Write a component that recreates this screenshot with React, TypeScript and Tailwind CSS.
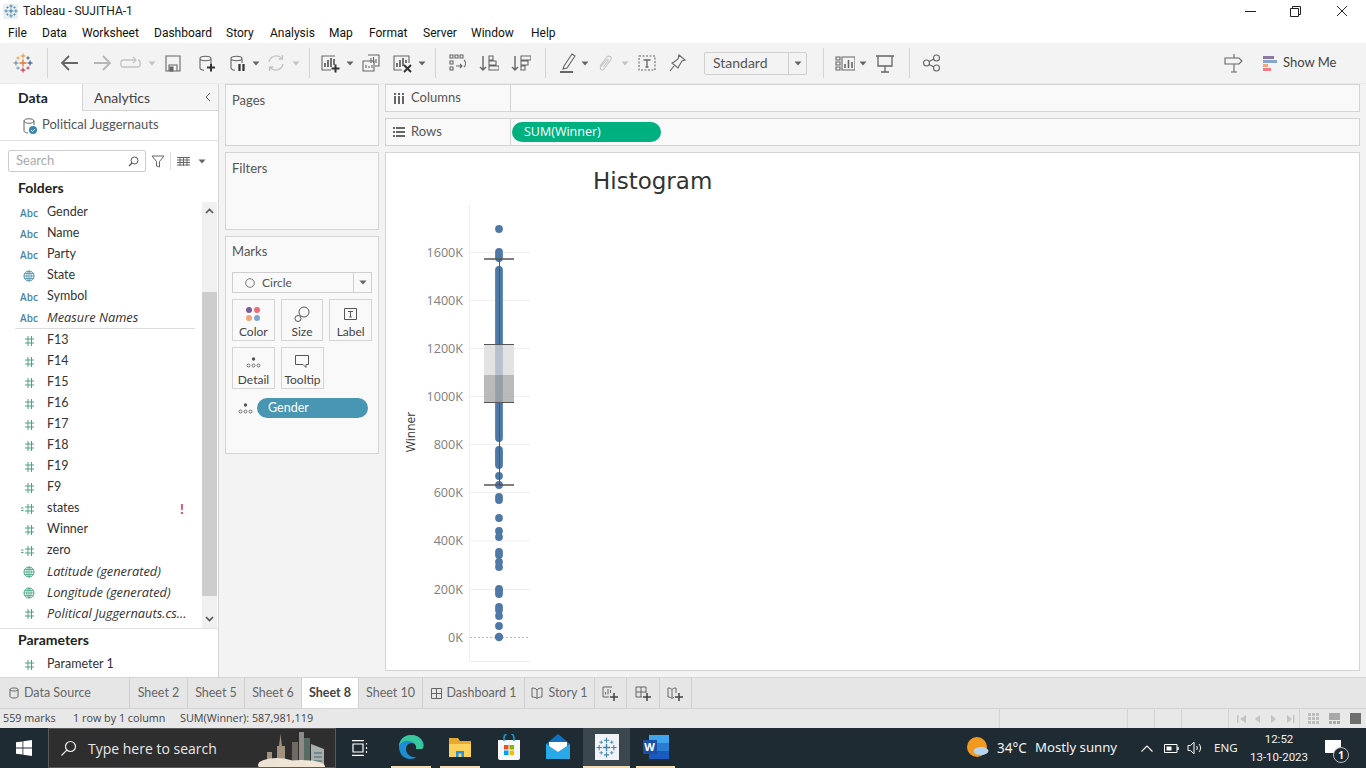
import React from "react";

const C = "#666666";

function Sep({ ml }: { ml: string }) {
  return <div className={`w-px h-[30px] bg-[#d4d4d4] ${ml}`} />;
}

function Caret({ ml, color = "#666666" }: { ml: string; color?: string }) {
  return (
    <svg width="8" height="5" viewBox="0 0 8 5" className={ml}>
      <path d="M0.5 0.5h7L4 4.5z" fill={color} />
    </svg>
  );
}

function Ico({ ml, w = 20, children }: { ml: string; w?: number; children: React.ReactNode }) {
  return (
    <svg width={w} height="22" viewBox={`0 0 ${w} 22`} fill="none" stroke={C} strokeWidth="1.1" className={`shrink-0 ${ml}`}>
      {children}
    </svg>
  );
}

function Snow({ size, colors }: { size: number; colors: string[] }) {
  const big = (x: number, y: number, r: number, c: string, w = 1) => (
    <g stroke={c} strokeWidth={w}>
      <path d={`M${x - r} ${y}H${x + r}M${x} ${y - r}V${y + r}`} />
    </g>
  );
  return (
    <svg width={size} height={size} viewBox="0 0 20 20" fill="none">
      {big(10, 10, 3.5, colors[0], 1.3)}
      {big(10, 3, 2.5, colors[1])}
      {big(10, 17, 2.5, colors[2])}
      {big(3, 10, 2.5, colors[3])}
      {big(17, 10, 2.5, colors[4])}
      {big(5, 5, 1.7, colors[1], 0.8)}
      {big(15, 5, 1.7, colors[4], 0.8)}
      {big(5, 15, 1.7, colors[3], 0.8)}
      {big(15, 15, 1.7, colors[2], 0.8)}
    </svg>
  );
}

function Cyl({ x = 4 }: { x?: number }) {
  return (
    <path d={`M${x} 6.5c0-3 11-3 11 0M${x} 6.5c0 3 11 3 11 0M15 6.5V11M${x} 6.5V16c0 1.2 2 2 4 2.2`} />
  );
}

function Toolbar() {
  return (
    <div className="h-[41px] bg-[#f3f3f3] flex items-center shrink-0 border-b border-[#ebebeb]">
      <div className="ml-[13px] w-5 h-5"><Snow size={20} colors={["#e8762b", "#e8962b", "#c72037", "#5b879b", "#1f447a"]} /></div>
      <Sep ml="ml-[14px]" />
      <Ico ml="ml-[12px]"><path d="M2 11h16M9 4l-7 7 7 7" stroke="#666" strokeWidth="1.8" /></Ico>
      <Ico ml="ml-[12px]"><path d="M2 11h16M11 4l7 7-7 7" stroke="#b5b5b5" strokeWidth="1.8" /></Ico>
      <Ico ml="ml-[7px]" w={24}><path d="M16 8H4c-3 0-3 7 0 7h15c3 0 3-7 0-7M14 5l3 3-3 3" stroke="#c4c4c4" strokeWidth="1.3" /></Ico>
      <Caret ml="ml-[5px]" color="#c4c4c4" />
      <Ico ml="ml-[7px]"><path d="M3 4h14v15H3zM6 19v-6h8v6" /><path d="M7 15h3v4H7z" fill="#666" /></Ico>
      <Ico ml="ml-[13px]"><Cyl /><path d="M11 15.5h8M15 11.5v8" stroke="#333" strokeWidth="2" /></Ico>
      <Ico ml="ml-[11px]"><Cyl /><path d="M12.5 12v7M16.5 12v7" stroke="#333" strokeWidth="2.2" /></Ico>
      <Caret ml="ml-[5px]" />
      <Ico ml="ml-[6px]"><path d="M3 10a7.5 7.5 0 0 1 13-3.5M17 12a7.5 7.5 0 0 1-13 3.5M16.5 3v4h-4M3.5 19v-4h4" stroke="#c4c4c4" strokeWidth="1.3" /></Ico>
      <Caret ml="ml-[6px]" color="#c4c4c4" />
      <Sep ml="ml-[9px]" />
      <Ico ml="ml-[10px]"><path d="M15 4H2v14h9" /><path d="M5 15v-4M8 15V8M11 15V6M14 13V7" strokeWidth="1.8" /><path d="M11.5 16.5h8M15.5 12.5v8" stroke="#333" strokeWidth="2" /></Ico>
      <Caret ml="ml-[6px]" />
      <Ico ml="ml-[7px]"><path d="M7 3h11v11h-4M2 9h11v10H2z" /><path d="M10 11V6M12.5 11V5M15 11V7M5 16v-3M8 16v-2M11 16v-3" /></Ico>
      <Ico ml="ml-[11px]"><path d="M17 11V4H2v14h8" /><path d="M5 15v-4M8 15V8M11 14V6M14 11V8" strokeWidth="1.8" /><path d="M12 13l7 7M19 13l-7 7" stroke="#333" strokeWidth="2" /></Ico>
      <Caret ml="ml-[6px]" />
      <Sep ml="ml-[9px]" />
      <Ico ml="ml-[11px]"><path d="M3 3h3v3H3zM8 3h3v3H8zM13 3h3v3h-3zM3 9h3v3H3zM3 15h3v3H3z" /><path d="M9 14h6M13 12l2 2-2 2M17 8c2 2 2 5 0 7" /></Ico>
      <Ico ml="ml-[12px]"><path d="M4 4v14M1 15l3 3 3-3" strokeWidth="1.4" /><path d="M10 4h4v4h-4zM10 9h7v4h-7zM10 14h10v4H10z" /></Ico>
      <Ico ml="ml-[12px]"><path d="M4 4v14M1 15l3 3 3-3" strokeWidth="1.4" /><path d="M10 4h10v4H10zM10 9h7v4h-7zM10 14h4v4h-4z" /></Ico>
      <Sep ml="ml-[14px]" />
      <Ico ml="ml-[12px]"><path d="M6 14L14 2l3 2-8 12-4 1z" /><path d="M2 20h13" stroke="#444" strokeWidth="1.6" /></Ico>
      <Caret ml="ml-[3px]" />
      <Ico ml="ml-[6px]"><path d="M5 14L12 5c1.500-2 5.500 0 4 2.500L9 17c-1.500 2-4.500.5-3.500-2L11.500 8c.8-1 2.200-.2 1.500.8L8.500 15" stroke="#c4c4c4" strokeWidth="1.100" /></Ico>
      <Caret ml="ml-[6px]" color="#c4c4c4" />
      <Ico ml="ml-[8px]"><path d="M2 4h16v14H2z" strokeDasharray="2 1.5" /><path d="M6.5 8h7M10 8v7M8.5 15h3" strokeWidth="1.3" /></Ico>
      <Ico ml="ml-[10px]"><path d="M12 3l6 5-3 1-3 5-1 2-6-5 2-1 4-3zM7 14l-4 5" /></Ico>
      <div className="ml-[17px] w-[103px] h-[23px] border border-[#cfcfcf] rounded-[2px] flex items-center text-[14px] text-[#555] shrink-0">
        <span className="flex-1 pl-2 -mt-[1px]">Standard</span>
        <div className="w-[18px] h-full border-l border-[#cfcfcf] flex items-center justify-center"><Caret ml="" /></div>
      </div>
      <Sep ml="ml-[16px]" />
      <Ico ml="ml-[11px]"><path d="M1 5h4v3H1zM1 10h4v3H1zM1 15h4v3H1zM7 5h13v13H7z" /><path d="M10 16v-4M13.5 16V8M17 16v-6" strokeWidth="1.6" /></Ico>
      <Caret ml="ml-[4px]" />
      <Ico ml="ml-[8px]"><path d="M1 4h18M3 4v10h14V4M10 14v6M6 20h8" strokeWidth="1.3" /></Ico>
      <Sep ml="ml-[14px]" />
      <Ico ml="ml-[12px]"><circle cx="4.5" cy="11" r="3" /><circle cx="14.5" cy="6" r="3" /><circle cx="14.5" cy="16" r="3" /><path d="M7 9.5l5-2.5M7 12.5l5 2.5" /></Ico>
      <Ico ml="ml-auto" w={20}><path d="M1 6h14l3 3-3 3H1zM10 2v4M10 12v8M7 20h6" /></Ico>
      <div className="ml-[19px] w-[14px] flex flex-col gap-px shrink-0">
        <div className="h-[3px] w-[11px] bg-[#8b7aa0]" />
        <div className="h-[3px] w-[14px] bg-[#85a5cc]" />
        <div className="h-[3px] w-[5px] bg-[#f2a675]" />
        <div className="h-[3px] w-[8px] bg-[#f27b86]" />
      </div>
      <span className="ml-[6px] mr-[29px] w-[54px] whitespace-nowrap text-[13px] text-[#444] -mt-[1px]">Show Me</span>
    </div>
  );
}

function Abc() {
  return <span className="text-[10px] font-semibold text-[#4a84a5] w-[18px] text-center leading-none font-['Open_Sans']">Abc</span>;
}

function Globe({ c = "#4b8fab" }: { c?: string }) {
  return (
    <svg width="18" height="12" viewBox="0 0 18 12" fill="none" stroke={c} strokeWidth="1">
      <circle cx="9" cy="6" r="5" />
      <path d="M4 6h10M4.6 3.5h8.8M4.6 8.5h8.8M9 1v10M9 1c-3 3-3 7 0 10M9 1c3 3 3 7 0 10" strokeWidth="0.8" />
    </svg>
  );
}

function Hash({ calc }: { calc?: boolean }) {
  return (
    <svg width="18" height="12" viewBox="0 0 18 12" fill="none" stroke="#46a582" strokeWidth="1">
      <path d="M5 4h9M5 8h9M8 1v10M11.500 1v10" />
      {calc && <path d="M1 5h2.500M1 7.500h2.500" />}
    </svg>
  );
}

function Field({ icon, name, italic, bang }: { icon: React.ReactNode; name: string; italic?: boolean; bang?: boolean }) {
  return (
    <div className="h-[21px] flex items-center pl-[20px] shrink-0">
      <div className="w-[18px] flex justify-center">{icon}</div>
      <span className={`ml-[9px] text-[#333] whitespace-nowrap ${italic ? "italic text-[12.800px] font-['Open_Sans']" : "text-[12.500px]"}`}>{name}</span>
      {bang && <span className="ml-auto mr-[18px] text-[14px] font-bold text-[#d0473b]">!</span>}
    </div>
  );
}

function Chevron({ up }: { up?: boolean }) {
  return (
    <svg width="9" height="6" viewBox="0 0 9 6" fill="none" stroke="#555" strokeWidth="1.6">
      <path d={up ? "M1 5l3.5-3.5L8 5" : "M1 1l3.5 3.5L8 1"} />
    </svg>
  );
}

function LeftPane() {
  return (
    <div className="w-[219px] bg-white border-r border-[#d4d4d4] flex flex-col shrink-0">
      <div className="h-[27px] flex shrink-0">
        <div className="w-[82px] flex items-center pl-[18px] text-[14px] font-bold text-[#222]">Data</div>
        <div className="flex-1 bg-[#f5f5f5] border-l border-b border-[#d4d4d4] flex items-center pl-[11px] pr-[7px] text-[14px] text-[#444]">
          <span className="flex-1">Analytics</span>
          <svg width="6" height="10" viewBox="0 0 6 10" fill="none" stroke="#666"><path d="M5 1L1 5l4 4" /></svg>
        </div>
      </div>
      <div className="h-[30px] border-b border-[#e3e3e3] flex items-center pl-[22px] shrink-0">
        <svg width="16" height="18" viewBox="0 0 16 18" fill="none" stroke="#666">
          <path d="M2 4c0-3 10-3 10 0M2 4c0 3 10 3 10 0M12 4v4M2 4v10c0 1 2 2 4 2" />
          <circle cx="11" cy="13" r="4" fill="#3c83b0" stroke="none" />
          <path d="M9 13l1.5 1.5L13 12" stroke="#fff" />
        </svg>
        <span className="ml-[4px] text-[13px] text-[#555] -mt-[1px]">Political Juggernauts</span>
      </div>
      <div className="h-[61px] shrink-0 flex flex-col">
        <div className="flex items-center mt-[9px] pl-2">
          <div className="w-[138px] h-[22px] border border-[#cccccc] rounded-[2px] flex items-center pl-[7px] pr-[6px] text-[13px] text-[#aaa]">
            <span className="flex-1">Search</span>
            <svg width="11" height="11" viewBox="0 0 11 11" fill="none" stroke="#555"><circle cx="6.5" cy="4.5" r="3.5" /><path d="M4 7l-3 3" strokeWidth="1.3" /></svg>
          </div>
          <svg width="14" height="13" viewBox="0 0 14 13" fill="none" stroke="#666" className="ml-[5px]"><path d="M1 1h12L8.5 6.5V12l-3-1V6.5z" /></svg>
          <div className="w-px h-[18px] bg-[#ddd] ml-[5px]" />
          <svg width="13" height="9" viewBox="0 0 13 9" fill="none" stroke="#666" className="ml-[6px]"><path d="M0 .5h13M0 3h13M0 5.500h13M0 8h13M3 0v9M6.500 0v9M10 0v9" /></svg>
          <Caret ml="ml-[8px]" />
        </div>
        <div className="mt-[6px] pl-[18px] text-[14px] font-bold text-[#222] leading-[20px]">Folders</div>
      </div>
      <div className="h-[426px] flex shrink-0 border-b border-[#e3e3e3] box-content">
        <div className="w-[202px] overflow-hidden flex flex-col">
          <Field icon={<Abc />} name="Gender" />
          <Field icon={<Abc />} name="Name" />
          <Field icon={<Abc />} name="Party" />
          <Field icon={<Globe />} name="State" />
          <Field icon={<Abc />} name="Symbol" />
          <Field icon={<Abc />} name="Measure Names" italic />
          <div className="h-px bg-[#dddddd] ml-[15px] mr-[7px] mb-[1px] shrink-0" />
          <Field icon={<Hash />} name="F13" />
          <Field icon={<Hash />} name="F14" />
          <Field icon={<Hash />} name="F15" />
          <Field icon={<Hash />} name="F16" />
          <Field icon={<Hash />} name="F17" />
          <Field icon={<Hash />} name="F18" />
          <Field icon={<Hash />} name="F19" />
          <Field icon={<Hash />} name="F9" />
          <Field icon={<Hash calc />} name="states" bang />
          <Field icon={<Hash />} name="Winner" />
          <Field icon={<Hash calc />} name="zero" />
          <Field icon={<Globe c="#46a582" />} name="Latitude (generated)" italic />
          <Field icon={<Globe c="#46a582" />} name="Longitude (generated)" italic />
          <Field icon={<Hash />} name="Political Juggernauts.cs..." italic />
        </div>
        <div className="w-[15px] flex flex-col bg-[#f0f0f0]">
          <div className="h-[90px] flex justify-center pt-[6px]"><Chevron up /></div>
          <div className="h-[304px] bg-[#cdcdcd]" />
          <div className="h-[32px] flex justify-center items-end pb-[6px]"><Chevron /></div>
        </div>
      </div>
      <div className="pl-[18px] pt-[1px] text-[14px] font-bold text-[#222] leading-[20px]">Parameters</div>
      <div className="mt-[4px]"><Field icon={<Hash />} name="Parameter 1" /></div>
    </div>
  );
}

function Card({ title, h }: { title: string; h: string }) {
  return (
    <div className={`bg-[#f9f9f9] border border-[#d4d4d4] pl-[6px] pt-[6px] text-[13px] text-[#555] ${h}`}>{title}</div>
  );
}

function MarkBtn({ label, children }: { label: string; children: React.ReactNode }) {
  return (
    <div className="w-[43px] h-[42px] border border-[#d4d4d4] flex flex-col items-center justify-between pt-[5px] pb-[1px]">
      <div className="h-[18px] flex items-center justify-center">{children}</div>
      <span className="text-[12px] text-[#444] leading-[14px]">{label}</span>
    </div>
  );
}

function DetailDots({ c = "#555" }: { c?: string }) {
  return (
    <svg width="15" height="11" viewBox="0 0 15 11" fill="none" stroke={c} strokeWidth="0.8">
      <circle cx="7.500" cy="2" r="1.700" fill={c} stroke="none" />
      <circle cx="2.500" cy="8.500" r="1.500" /><circle cx="7.500" cy="8.500" r="1.500" /><circle cx="12.500" cy="8.500" r="1.500" />
    </svg>
  );
}

function MarksCard() {
  return (
    <div className="h-[218px] bg-[#f9f9f9] border border-[#d4d4d4] px-[6px] flex flex-col">
      <div className="mt-[6px] text-[13px] text-[#555] leading-[17px]">Marks</div>
      <div className="mt-[12px] h-[21px] border border-[#cfcfcf] flex items-center text-[12px] text-[#555]">
        <svg width="10" height="10" viewBox="0 0 10 10" fill="none" stroke="#777" className="ml-[12px]"><circle cx="5" cy="5" r="4.300" /></svg>
        <span className="ml-[7px] flex-1">Circle</span>
        <div className="w-[18px] h-full border-l border-[#cfcfcf] flex items-center justify-center"><Caret ml="" /></div>
      </div>
      <div className="mt-[6px] flex gap-[6px]">
        <MarkBtn label="Color">
          <svg width="16" height="16" viewBox="0 0 16 16"><circle cx="4" cy="4" r="3" fill="#7b5e96" /><circle cx="12" cy="4" r="3" fill="#ee6a78" /><circle cx="4" cy="12" r="3" fill="#f2a575" /><circle cx="12" cy="12" r="3" fill="#7ea3cc" /></svg>
        </MarkBtn>
        <MarkBtn label="Size">
          <svg width="16" height="16" viewBox="0 0 16 16" fill="none" stroke="#555"><circle cx="10" cy="6" r="5" /><circle cx="4" cy="12.500" r="3" fill="#f9f9f9" /></svg>
        </MarkBtn>
        <MarkBtn label="Label">
          <svg width="14" height="13" viewBox="0 0 14 13" fill="none" stroke="#555"><path d="M.5.5h12v11H.500z" /><path d="M4 3.500h5M6.500 3.500v5.500M5.200 9h2.600" /></svg>
        </MarkBtn>
      </div>
      <div className="mt-[6px] flex gap-[6px]">
        <MarkBtn label="Detail"><DetailDots /></MarkBtn>
        <MarkBtn label="Tooltip">
          <svg width="15" height="14" viewBox="0 0 15 14" fill="none" stroke="#555"><path d="M.5.500h13v9H11v3l-3-3H.500z" /></svg>
        </MarkBtn>
      </div>
      <div className="mt-[9px] flex items-center">
        <div className="ml-[6px]"><DetailDots /></div>
        <div className="ml-[4px] w-[111px] h-[20px] rounded-full bg-[#4996b2] text-white text-[12.500px] pl-[11px] flex items-center">Gender</div>
      </div>
    </div>
  );
}

function Shelf({ label, icon, children }: { label: string; icon: React.ReactNode; children?: React.ReactNode }) {
  return (
    <div className="h-[28px] bg-[#f9f9f9] border border-[#d4d4d4] flex shrink-0">
      <div className="w-[125px] border-r border-[#d4d4d4] flex items-center pl-[7px] text-[13px] text-[#555]">
        {icon}
        <span className="ml-[6px]">{label}</span>
      </div>
      <div className="flex-1 flex items-center pl-px">{children}</div>
    </div>
  );
}

const AXIS = [
  ["1600K", 252.5], ["1400K", 300.5], ["1200K", 348.5], ["1000K", 396.5], ["800K", 444.5],
  ["600K", 492.5], ["400K", 541], ["200K", 589.5],
] as const;

const DOTS: number[] = [229, 252, 255, 258];
for (let y = 270; y <= 438; y += 3) DOTS.push(y);
for (let y = 450; y <= 466; y += 2.5) DOTS.push(y);
DOTS.push(476, 485, 497, 500, 518, 531, 537, 552, 555, 562, 567, 589, 591, 594, 607, 610, 616, 626);

function Chart() {
  const font = "'Open Sans', sans-serif";
  return (
    <svg width="160" height="465" viewBox="386 205 160 465" className="block">
      <path d="M469.500 205V661.500H530" stroke="#eeeeee" fill="none" />
      {AXIS.map(([t, y]) => (
        <g key={t}>
          <path d={`M470 ${y}H530`} stroke="#efefef" />
          <text x="463" y={y + 4} textAnchor="end" fontSize="12.600" fill="#808080" fontFamily={font}>{t}</text>
        </g>
      ))}
      <text x="463" y="642" textAnchor="end" fontSize="12.600" fill="#808080" fontFamily={font}>0K</text>
      <path d="M470 637.500H528" stroke="#bbbbbb" strokeDasharray="2 2" />
      <text transform="translate(415 432) rotate(-90)" textAnchor="middle" fontSize="12" fill="#333" fontFamily={font}>Winner</text>
      {DOTS.map((y, i) => <circle key={i} cx="499" cy={y} r="3.900" fill="#4e79a7" />)}
      <circle cx="499" cy="637" r="4.200" fill="#4e79a7" />
      <rect x="484" y="344.500" width="30" height="30.500" fill="#d9d9d9" fillOpacity="0.75" />
      <rect x="484" y="375" width="30" height="27.500" fill="#a9a9a9" fillOpacity="0.8" />
      <path d="M499.500 259V344.500M499.500 402.500V485" stroke="#555" />
      <path d="M484 344.500H514M484 402.500H514" stroke="#555" />
      <path d="M484 259H514M484 485H514" stroke="#555" strokeWidth="1.500" />
    </svg>
  );
}

function Main() {
  return (
    <div className="flex-1 flex min-h-0 bg-[#f3f3f3]">
      <LeftPane />
      <div className="w-[154px] ml-[6px] flex flex-col gap-[6px] shrink-0">
        <Card title="Pages" h="h-[62px]" />
        <Card title="Filters" h="h-[78px]" />
        <MarksCard />
      </div>
      <div className="w-[975px] ml-[6px] flex flex-col gap-[6px] shrink-0">
        <Shelf label="Columns" icon={
          <svg width="12" height="11" viewBox="0 0 12 11" fill="#666"><path d="M1 0h2v2H1zM1 3h2v8H1zM5 0h2v2H5zM5 3h2v8H5zM9 0h2v2H9zM9 3h2v8H9z" /></svg>
        } />
        <Shelf label="Rows" icon={
          <svg width="12" height="10" viewBox="0 0 12 10" fill="#666"><path d="M0 0h2v2H0zM3 0h9v2H3zM0 4h2v2H0zM3 4h9v2H3zM0 8h2v2H0zM3 8h9v2H3z" /></svg>
        }>
          <div className="w-[149px] h-[20px] rounded-full bg-[#00b180] text-white text-[12.500px] pl-[12px] flex items-center font-['Open_Sans']">SUM(Winner)</div>
        </Shelf>
        <div className="h-[519px] bg-white border border-[#d4d4d4] flex flex-col">
          <div className="ml-[207px] mt-[12px] h-[40px] text-[23px] leading-[32px] text-[#333] font-['DejaVu_Sans']">Histogram</div>
          <Chart />
        </div>
      </div>
    </div>
  );
}

function Tab({ w, active, children }: { w: string; active?: boolean; children: React.ReactNode }) {
  return (
    <div className={`${w} h-full border-r border-[#d0d0d0] flex items-center justify-center text-[12.500px] shrink-0 ${active ? "bg-white font-bold text-[#444]" : "text-[#666]"}`}>
      {children}
    </div>
  );
}

function Tabs() {
  return (
    <div className="h-[31px] bg-[#e6e6e6] border-t border-[#d4d4d4] flex shrink-0">
      <Tab w="w-[130px]">
        <div className="flex items-center w-full pl-[9px]">
          <svg width="10" height="12" viewBox="0 0 10 12" fill="none" stroke="#666"><path d="M1 2.500c0-2 8-2 8 0v7c0 2-8 2-8 0zM1 2.500c0 2 8 2 8 0" /></svg>
          <span className="ml-[5px]">Data Source</span>
        </div>
      </Tab>
      <Tab w="w-[58px]">Sheet 2</Tab>
      <Tab w="w-[57px]">Sheet 5</Tab>
      <Tab w="w-[57px]">Sheet 6</Tab>
      <Tab w="w-[57px]" active>Sheet 8</Tab>
      <Tab w="w-[64px]">Sheet 10</Tab>
      <Tab w="w-[102px]">
        <svg width="11" height="11" viewBox="0 0 11 11" fill="none" stroke="#666"><path d="M.5.5h10v10H.5zM5.500.5v10M.5 5.500h10" /></svg>
        <span className="ml-[5px]">Dashboard 1</span>
      </Tab>
      <Tab w="w-[70px]">
        <svg width="12" height="12" viewBox="0 0 12 12" fill="none" stroke="#666"><path d="M1 1c2 0 4 .5 5 2 1-1.500 3-2 5-2v9c-2 0-4 .5-5 1.500C5 10.500 3 10 1 10zM6 3v8.500" /></svg>
        <span className="ml-[5px]">Story 1</span>
      </Tab>
      <Tab w="w-[32px]">
        <svg width="17" height="15" viewBox="0 0 17 15" fill="none" stroke="#666"><path d="M10 1H1v10h6M3.500 8.500V6M6 8.500V3M8.500 7V4" /><path d="M8 11h8M12 7v8" stroke="#444" strokeWidth="1.500" /></svg>
      </Tab>
      <Tab w="w-[33px]">
        <svg width="17" height="15" viewBox="0 0 17 15" fill="none" stroke="#666"><path d="M7 11H1V1h10v6M6 1v10M1 6h10" /><path d="M8 11h8M12 7v8" stroke="#444" strokeWidth="1.500" /></svg>
      </Tab>
      <Tab w="w-[32px]">
        <svg width="17" height="15" viewBox="0 0 17 15" fill="none" stroke="#666"><path d="M1 2c2 0 3 .5 4 1.500 1-1 2-1.500 4-1.500v5M1 2v9c2 0 3 .5 4 1.500.5-.5 1-.8 2-1M5 3.500v9" /><path d="M8 11h8M12 7v8" stroke="#444" strokeWidth="1.500" /></svg>
      </Tab>
    </div>
  );
}

function Status() {
  return (
    <div className="h-[20px] bg-[#e8e8e8] border-t border-[#d4d4d4] flex items-center text-[10.800px] text-[#444] shrink-0 font-['Open_Sans']">
      <span className="ml-[3px] w-[70px]">559 marks</span>
      <span className="w-[107px]">1 row by 1 column</span>
      <span className="w-[819px]">SUM(Winner): 587,981,119</span>
      <div className="h-full w-px bg-[#d4d4d4]" />
      <div className="w-[127px]" />
      <div className="h-full w-px bg-[#d4d4d4]" />
      <div className="w-[26px]" />
      <div className="h-full w-px bg-[#d4d4d4]" />
      <div className="w-[26px]" />
      <div className="h-full w-px bg-[#d4d4d4]" />
      <div className="w-[46px]" />
      <div className="h-full w-px bg-[#d4d4d4]" />
      <svg width="70" height="10" viewBox="0 0 70 10" fill="#c4c4c4" className="shrink-0">
        <path d="M8 1h1.500v8H8zM17 1v8l-6-4zM31 1v8l-5-4zM42 1l5 4-5 4zM58 1l5 4-5 4zM64 1h1.500v8H64z" />
      </svg>
      <div className="h-full w-px bg-[#d4d4d4]" />
      <svg width="11" height="11" viewBox="0 0 11 11" fill="#bdbdbd" className="ml-[8px] shrink-0">
        <path d="M0 0h3v3H0zM4 0h3v3H4zM8 0h3v3H8zM0 4h3v3H0zM4 4h3v3H4zM8 4h3v3H8zM0 8h3v3H0zM4 8h3v3H4zM8 8h3v3H8z" />
      </svg>
      <svg width="11" height="11" viewBox="0 0 11 11" fill="#a8a8a8" className="ml-[10px] shrink-0">
        <path d="M0 0h11v7H0zM0 8h3v3H0zM4 8h3v3H4zM8 8h3v3H8z" />
      </svg>
      <div className="ml-[10px] w-[11px] h-[11px] bg-[#6e6e6e] shrink-0" />
    </div>
  );
}

function AppSlot({ ml, w, on, bar, children }: { ml: string; w: string; on?: boolean; bar?: boolean; children: React.ReactNode }) {
  return (
    <div className={`${ml} ${w} h-full flex flex-col items-center shrink-0 ${on ? "bg-[#3b474f]" : ""}`}>
      <div className="flex-1 flex items-center justify-center">{children}</div>
      <div className={`h-[2px] w-full ${bar ? "bg-[#f4dcb4]" : ""}`} />
    </div>
  );
}

function Taskbar() {
  return (
    <div className="h-[40px] bg-[#1f2b33] flex items-center text-white shrink-0">
      <svg width="16" height="16" viewBox="0 0 16 16" fill="#fff" className="ml-[16px] shrink-0">
        <path d="M0 2.300l6.500-.9v6.200H0zM7.300 1.300L16 0v7.600H7.300zM0 8.400h6.500v6.200L0 13.700zM7.300 8.400H16V16l-8.700-1.300z" />
      </svg>
      <div className="ml-[16px] w-[288px] h-full bg-[#2e2e2e] border border-[#5a5a5a] flex items-center shrink-0 overflow-hidden">
        <svg width="17" height="17" viewBox="0 0 17 17" fill="none" stroke="#eee" strokeWidth="1.200" className="ml-[11px]"><circle cx="10.500" cy="6.500" r="5" /><path d="M6.800 10.200L1.500 15.500" /></svg>
        <span className="ml-[11px] text-[14px] text-[#e8e8e8] whitespace-nowrap font-['Open_Sans']">Type here to search</span>
        <svg width="78" height="40" viewBox="0 0 78 40" className="ml-auto shrink-0">
          <path d="M10 24h5v16h-5zM20 30V18h2l1.500-12L25 18h3v22z" fill="#a0927f" />
          <path d="M42 4h5v36h-5z" fill="#8f8a86" />
          <path d="M35 14h6v26h-6z" fill="#6e6a63" />
          <path d="M47 10h6v30h-6z" fill="#566b64" />
          <path d="M54 16l13 5v19H54z" fill="#a8b0ae" />
          <path d="M57 25h8M57 29h8M57 33h8" stroke="#5d8087" strokeWidth="1.500" />
          <ellipse cx="20" cy="37" rx="19" ry="7" fill="#ede3d6" />
          <ellipse cx="44" cy="38" rx="24" ry="6" fill="#f1e6d6" />
        </svg>
      </div>
      <svg width="18" height="16" viewBox="0 0 18 16" fill="none" stroke="#fff" strokeWidth="1.200" className="ml-[15px] shrink-0">
        <path d="M1 .6h12M1 15.400h12M2 4h10v8H2zM15.500 3v1.500M15.500 7v2M15.500 11v2" />
      </svg>
      <AppSlot ml="ml-[22px]" w="w-[40px]" bar>
        <svg width="26" height="26" viewBox="0 0 26 26">
          <path d="M13 1C6 1 1 6 1 13c0 7 5 12 11 12 3 0 5-1 7-2-5 1-11-2-11-8 0-4 3-6 6-6 4 0 5 3 4 5h6c1 0 2-1 2-3C25 5 20 1 13 1z" fill="#1a8fd1" />
          <path d="M13 1C6 1 1 6 1 13c1-5 6-7 10-6 5 1 8 4 7 8h6c1 0 1-2 1-3C25 5 20 1 13 1z" fill="#38c99a" />
        </svg>
      </AppSlot>
      <AppSlot ml="ml-[9px]" w="w-[40px]" bar>
        <svg width="24" height="22" viewBox="0 0 24 22">
          <path d="M1 2h9l2 3h11v16H1z" fill="#e8a92f" />
          <path d="M1 8h22v13H1z" fill="#fbd25c" />
          <path d="M8 21v-6h8v6h-2.500v-3.500h-3V21z" fill="#2b8fd9" />
        </svg>
      </AppSlot>
      <AppSlot ml="ml-[9px]" w="w-[40px]">
        <svg width="24" height="27" viewBox="0 0 24 27">
          <path d="M1 6h22v18a2 2 0 0 1-2 2H3a2 2 0 0 1-2-2z" fill="#f7f7f7" />
          <path d="M7 7V4a5 5 0 0 1 10 0v3" fill="none" stroke="#18a0d8" strokeWidth="1.500" />
          <path d="M7 11h4.500v4.500H7z" fill="#e8502c" /><path d="M12.500 11H17v4.500h-4.500z" fill="#7fba00" />
          <path d="M7 16.500h4.500V21H7z" fill="#00a4ef" /><path d="M12.500 16.500H17V21h-4.500z" fill="#ffb900" />
        </svg>
      </AppSlot>
      <AppSlot ml="ml-[9px]" w="w-[40px]">
        <svg width="26" height="26" viewBox="0 0 26 26">
          <path d="M1 10L13 0l12 10v15H1z" fill="#0f72bf" />
          <path d="M1 10l12 8 12-8v15H1z" fill="#29a9e6" />
          <path d="M4 8h18v4l-9 6-9-6z" fill="#fff" />
        </svg>
      </AppSlot>
      <AppSlot ml="ml-[5px]" w="w-[47px]" on bar>
        <div className="w-[24px] h-[26px] bg-[#f0f4f6] flex items-center justify-center">
          <Snow size={21} colors={["#3f83b5", "#3f83b5", "#3f83b5", "#3f83b5", "#3f83b5"]} />
        </div>
      </AppSlot>
      <AppSlot ml="ml-[6px]" w="w-[39px]" bar>
        <div className="relative w-[26px] h-[24px]">
          <div className="absolute left-[6px] top-0 w-[20px] h-[24px] bg-[#2b7cd3] flex flex-col">
            <div className="h-[8px] bg-[#41a5ee]" />
            <div className="h-[8px] bg-[#2b7cd3]" />
            <div className="h-[8px] bg-[#185abd]" />
          </div>
          <div className="absolute left-0 top-[5px] w-[14px] h-[14px] bg-[#1a4fa5] text-white text-[11px] font-bold leading-[14px] text-center font-['Open_Sans']">W</div>
        </div>
      </AppSlot>
      <div className="ml-auto flex items-center h-full relative font-['Noto_Sans']">
        <svg width="22" height="22" viewBox="0 0 22 22" className="shrink-0">
          <circle cx="10" cy="10" r="10" fill="#f29a1f" />
          <ellipse cx="14" cy="14" rx="7.500" ry="4" fill="#b7d5ee" />
        </svg>
        <span className="ml-[8px] w-[29px] whitespace-nowrap text-[13.500px] text-[#f2f2f2]">34°C</span>
        <span className="ml-[9px] w-[100px] whitespace-nowrap text-[13.200px] text-[#f2f2f2]">Mostly sunny</span>
        <svg width="12" height="7" viewBox="0 0 12 7" fill="none" stroke="#fff" strokeWidth="1.100" className="ml-[6px] shrink-0"><path d="M.5 6.500L6 1l5.500 5.500" /></svg>
        <svg width="15" height="9" viewBox="0 0 15 9" fill="none" stroke="#fff" className="ml-[11px] shrink-0"><path d="M.5.500h12.500v8H.500z" /><path d="M2.500 2.500h5v4h-5z" fill="#fff" stroke="none" /><path d="M14 3v3" strokeWidth="1.500" /></svg>
        <svg width="16" height="14" viewBox="0 0 16 14" fill="none" stroke="#fff" className="ml-[8px] shrink-0"><path d="M1 4.500h2.500L7 1v12L3.500 9.500H1zM9.500 5c1 1 1 3 0 4M12 3c2 2 2 6 0 8" /></svg>
        <span className="ml-[11px] w-[23px] text-[11.500px] text-[#f2f2f2]">ENG</span>
        <div className="ml-[13px] w-[58px] flex flex-col items-center text-[11.500px] leading-[18px] text-[#f2f2f2] shrink-0 font-['Roboto']">
          <span>12:52</span>
          <span className="whitespace-nowrap">13-10-2023</span>
        </div>
        <div className="ml-[17px] mr-[25px] relative w-[16px] h-[13px] bg-white shrink-0 -mt-[3px]">
          <div className="absolute left-[8px] top-[7px] w-[16px] h-[16px] rounded-full bg-[#1f2b33] border border-[#bbb] text-[10px] font-bold leading-[14px] text-center">1</div>
        </div>
      </div>
    </div>
  );
}

export default function App() {
  return (
    <div className="w-[1366px] h-[768px] overflow-hidden bg-white flex flex-col font-['Lato',sans-serif]">
      <div className="h-[22px] flex items-center shrink-0 text-[12px] text-[#222] font-['Roboto']">
        <div className="ml-[3px] w-[15px] h-[15px] bg-[#e8f0f5] flex items-center justify-center"><Snow size={14} colors={["#2b6c9c", "#2b6c9c", "#2b6c9c", "#2b6c9c", "#2b6c9c"]} /></div>
        <span className="ml-[5px]">Tableau - SUJITHA-1</span>
        <div className="ml-auto flex items-center">
          <svg width="11" height="1" className="mr-[34px]"><rect width="11" height="1" fill="#222" /></svg>
          <svg width="11" height="11" viewBox="0 0 11 11" fill="none" stroke="#222" className="mr-[35px]"><path d="M.5 2.500h8v8h-8zM2.500 2.500V.5h8v8h-2" /></svg>
          <svg width="12" height="12" viewBox="0 0 12 12" fill="none" stroke="#222" className="mr-[18px]"><path d="M1 1l10 10M11 1L1 11" /></svg>
        </div>
      </div>
      <div className="h-[21px] flex items-center shrink-0 text-[12px] text-[#111] font-['Roboto']">
        <span className="ml-[8px] w-[34px]">File</span>
        <span className="w-[40px]">Data</span>
        <span className="w-[72px]">Worksheet</span>
        <span className="w-[72px]">Dashboard</span>
        <span className="w-[44px]">Story</span>
        <span className="w-[59px]">Analysis</span>
        <span className="w-[40px]">Map</span>
        <span className="w-[54px]">Format</span>
        <span className="w-[48px]">Server</span>
        <span className="w-[60px]">Window</span>
        <span>Help</span>
      </div>
      <Toolbar />
      <Main />
      <Tabs />
      <Status />
      <Taskbar />
    </div>
  );
}
